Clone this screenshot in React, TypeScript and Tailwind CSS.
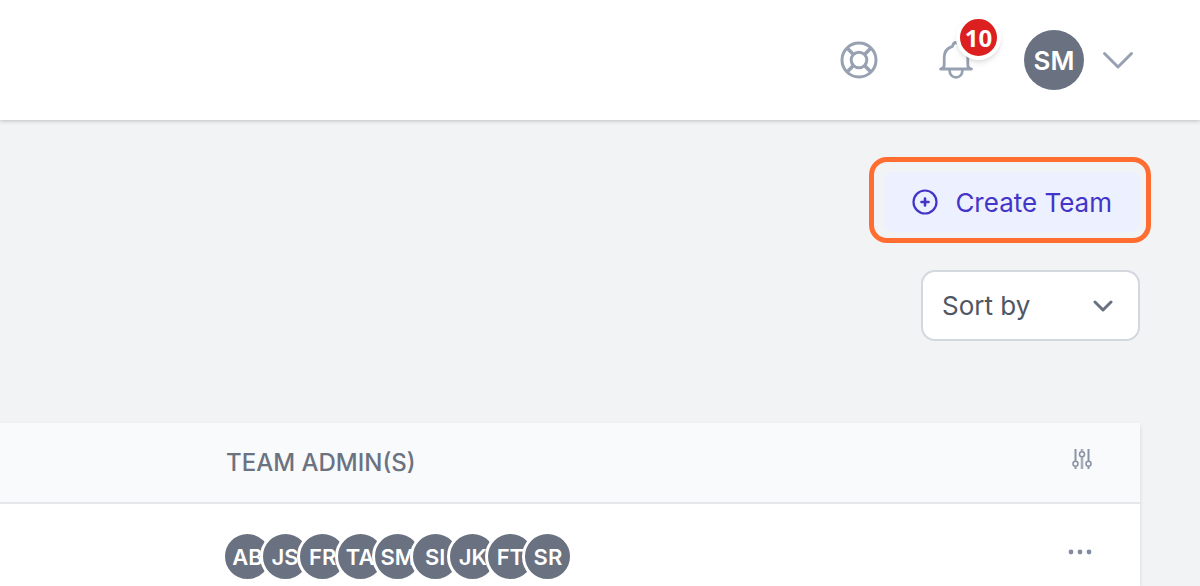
import React from "react";

const admins = ["AB", "JS", "FR", "TA", "SM", "SI", "JK", "FT", "SR"];

function LifebuoyIcon() {
  return (
    <svg viewBox="0 0 38 38" className="size-[38px]" fill="none" stroke="currentColor" strokeWidth="3" aria-hidden="true">
      <circle cx="19" cy="19" r="17" />
      <circle cx="19" cy="19" r="7.8" />
      <path d="M7 7l6.500 6.500M31 7l-6.500 6.500M7 31l6.500-6.500M31 31l-6.500-6.500" strokeWidth="3.600" />
    </svg>
  );
}

function BellIcon() {
  return (
    <svg viewBox="0 0 34 38" className="h-[38px] w-[34px]" fill="none" stroke="currentColor" strokeWidth="2.8" strokeLinecap="round" strokeLinejoin="round" aria-hidden="true">
      <path d="M1.500 28c2.600-.6 3.700-1.800 3.700-4v-7.500c0-5.600 3-9.600 8.300-11.200.5-2.400 1.700-3.800 3.500-3.800s3 1.400 3.500 3.800c5.300 1.600 8.300 5.600 8.300 11.200V24c0 2.200 1.100 3.400 3.700 4z" />
      <path d="M10.500 29c.2 4.600 2.900 7.400 6.500 7.400s6.300-2.800 6.500-7.400" />
    </svg>
  );
}

function SlidersIcon() {
  return (
    <svg viewBox="0 0 20 20" className="size-5" fill="none" stroke="currentColor" strokeWidth="1.6" aria-hidden="true">
      <path d="M3.500 0v12M3.500 17.500V20M16.500 0v12M16.500 17.500V20" strokeWidth="2" />
      <path d="M10 0v2.500M10 8v12" strokeWidth="2.600" opacity="0.75" />
      <circle cx="3.500" cy="14.800" r="2.500" />
      <circle cx="10" cy="5.200" r="2.500" />
      <circle cx="16.500" cy="14.800" r="2.500" />
    </svg>
  );
}

function TopBar() {
  return (
    <header className="flex h-[120px] items-center justify-end bg-white pr-[66px] text-[#98a1b1] shadow-[0_1px_4px_rgba(0,0,0,0.22)]">
      <button type="button" aria-label="Help" className="mr-[61px]">
        <LifebuoyIcon />
      </button>
      <button type="button" aria-label="Notifications" className="relative mr-[51px]">
        <BellIcon />
        <span className="absolute -top-[26px] left-[17px] flex size-[45px] items-center justify-center rounded-full border-4 border-white bg-[#dc2020] font-['Open_Sans',sans-serif] text-[24px] leading-none font-bold text-white shadow-md">
          10
        </span>
      </button>
      <button type="button" aria-label="Account menu" className="flex items-center gap-[18px]">
        <span className="flex size-[60px] items-center justify-center rounded-full bg-[#6a7180] text-[26px] font-semibold text-white">SM</span>
        <svg viewBox="0 0 32 20" className="h-5 w-8" fill="none" stroke="currentColor" strokeWidth="3" strokeLinecap="round" strokeLinejoin="round" aria-hidden="true">
          <path d="M2.500 3.500 16 17 29.500 3.500" />
        </svg>
      </button>
    </header>
  );
}

function Toolbar() {
  return (
    <div className="flex flex-col items-end gap-[27px]">
      <div className="-mr-[11px] rounded-[18px] border-5 border-[#ff6e30] pt-[10px] pr-[6px] pb-[6px] pl-[10px]">
        <button type="button" className="flex h-[60px] items-center gap-[17px] rounded-lg bg-[#edf0fe] px-7 text-[26px] text-[#4235c8]">
          <svg viewBox="0 0 26 26" className="size-[26px]" fill="none" stroke="currentColor" strokeWidth="2.200" strokeLinecap="round" aria-hidden="true">
            <circle cx="13" cy="13" r="11.500" />
            <path d="M13 9.500v7M9.500 13h7" strokeWidth="2.600" />
          </svg>
          Create Team
        </button>
      </div>
      <div className="grid w-[219px] items-center">
        <select aria-label="Sort by" className="col-start-1 row-start-1 h-[71px] w-full appearance-none rounded-[14px] border-2 border-[#d3d7de] bg-white pr-14 pl-[19px] text-[26px] text-[#4f5664]">
          <option>Sort by</option>
        </select>
        <svg viewBox="0 0 20 14" className="pointer-events-none col-start-1 row-start-1 mr-[27px] h-[14px] w-5 justify-self-end text-[#687181]" fill="none" stroke="currentColor" strokeWidth="3" strokeLinecap="round" strokeLinejoin="round" aria-hidden="true">
          <path d="m2 3 8 8 8-8" />
        </svg>
      </div>
    </div>
  );
}

function TeamsTable() {
  return (
    <table className="w-full grow bg-white shadow-[0_2px_4px_rgba(0,0,0,0.12)]">
      <thead>
        <tr className="h-20 border-b-2 border-[#e5e7eb] bg-[#f9fafc]">
          <th scope="col" className="pl-[226px] text-left text-[24px] font-medium text-[#6b7280]">
            TEAM ADMIN(S)
          </th>
          <th scope="col" className="w-[140px] pr-12 pb-2 text-[#8a94a6]">
            <button type="button" aria-label="Table settings" className="ml-auto block">
              <SlidersIcon />
            </button>
          </th>
        </tr>
      </thead>
      <tbody>
        <tr className="align-top">
          <td className="pt-[27px] pl-[222px]">
            <ul className="grid w-[338px] grid-cols-9">
              {admins.map((initials) => (
                <li key={initials} className="flex size-[51px] items-center justify-center rounded-full border-3 border-white bg-[#6a7180] text-[22px] leading-none font-semibold text-white">
                  {initials}
                </li>
              ))}
            </ul>
          </td>
          <td className="pt-[42px] pr-12 text-[#828c9e]">
            <button type="button" aria-label="Team actions" className="ml-auto block">
              <svg viewBox="0 0 24 12" className="h-3 w-6" fill="currentColor" aria-hidden="true">
                <circle cx="3" cy="6" r="2.400" />
                <circle cx="12" cy="6" r="2.400" />
                <circle cx="21" cy="6" r="2.400" />
              </svg>
            </button>
          </td>
        </tr>
      </tbody>
    </table>
  );
}

export default function App() {
  return (
    <div className="flex min-h-screen flex-col bg-[#f2f3f5] font-['Inter',sans-serif]">
      <TopBar />
      <main className="flex grow flex-col gap-[82px] pt-[37px] pr-[60px]">
        <Toolbar />
        <TeamsTable />
      </main>
    </div>
  );
}
